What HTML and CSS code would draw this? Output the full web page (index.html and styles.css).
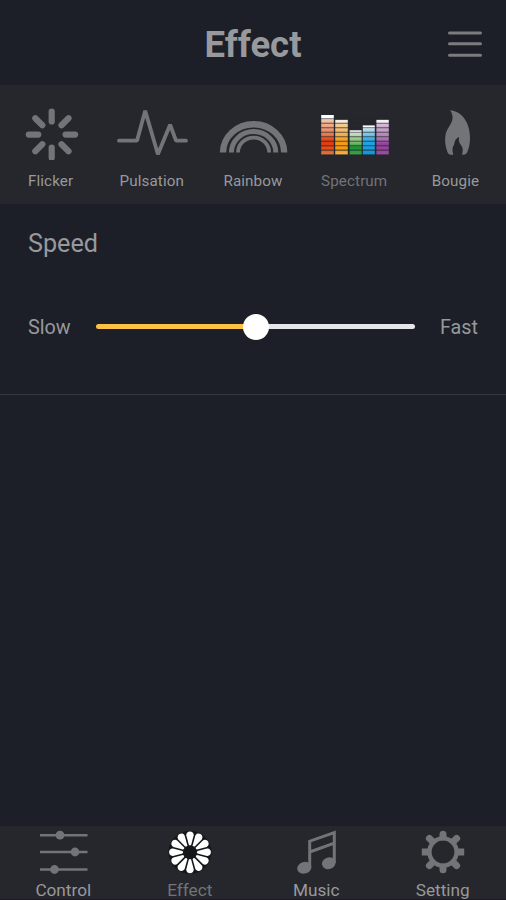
FILE: index.html
```html
<!DOCTYPE html>
<html lang="en">
<head>
<meta charset="utf-8">
<title>Effect</title>
<link rel="stylesheet" href="styles.css">
</head>
<body>
<div class="app">
  <header class="header">
    <h1 class="title">Effect</h1>
    <svg class="menu" viewBox="0 0 36 28" stroke="currentColor" stroke-width="3" stroke-linecap="round"><path d="M2.5 2h31M2.5 12.8h31M2.5 24.2h31"/></svg>
  </header>
  <nav class="effects">
    <div class="effect">
      <svg class="effect-icon" viewBox="11 100 80 60" fill="none" stroke="currentColor" stroke-width="6.2" stroke-linecap="round"><path d="M51.7 111.5v10M51.7 147.7v10M28.8 134.6h9.5M65.6 134.6h9.5M35.3 118.2l7 7M61.5 125.2l7-7M35.3 151.2l7-7M61.5 144.2l7 7"/></svg>
      <span>Flicker</span>
    </div>
    <div class="effect">
      <svg class="effect-icon" viewBox="112 100 80 60" fill="none" stroke="currentColor" stroke-width="3.8" stroke-linecap="round" stroke-linejoin="bevel"><path d="M119 140.7h18l8.2-30 12.7 43.6 12.2-29.6 5.9 16h10"/></svg>
      <span>Pulsation</span>
    </div>
    <div class="effect">
      <svg class="effect-icon" viewBox="213 100 80 60" fill="none" stroke="currentColor" stroke-width="6.4"><path d="M223 152.6a30.6 28.4 0 0 1 61.2 0"/><path stroke-width="5" d="M231.4 152.6a22.2 21 0 0 1 44.4 0"/><path stroke-width="3.8" d="M238 152.6a15.6 15 0 0 1 31.2 0"/></svg>
      <span>Rainbow</span>
    </div>
    <div class="effect active">
      <svg class="effect-icon" viewBox="314.4 100 80 60" fill="none">
        <defs>
          <linearGradient id="red" gradientUnits="userSpaceOnUse" x1="0" y1="115" x2="0" y2="155"><stop offset=".1" stop-color="#fff"/><stop offset=".12" stop-color="#f3c7aa"/><stop offset=".48" stop-color="#e87b50"/><stop offset=".65" stop-color="#df3d12"/><stop offset=".78" stop-color="#df4213"/><stop offset="1" stop-color="#e67a3c"/></linearGradient>
          <linearGradient id="orange" gradientUnits="userSpaceOnUse" x1="0" y1="119" x2="0" y2="155"><stop offset=".1" stop-color="#f8eadb"/><stop offset=".13" stop-color="#f4ce9f"/><stop offset=".65" stop-color="#f29a14"/><stop offset=".87" stop-color="#f29d10"/><stop offset="1" stop-color="#f6bd5c"/></linearGradient>
          <linearGradient id="green" gradientUnits="userSpaceOnUse" x1="0" y1="128" x2="0" y2="155"><stop offset=".17" stop-color="#fff"/><stop offset=".2" stop-color="#c7dfbd"/><stop offset=".55" stop-color="#79b76e"/><stop offset=".72" stop-color="#169632"/><stop offset="1" stop-color="#41a34a"/></linearGradient>
          <linearGradient id="blue" gradientUnits="userSpaceOnUse" x1="0" y1="124" x2="0" y2="155"><stop offset=".13" stop-color="#fff"/><stop offset=".16" stop-color="#b8def1"/><stop offset=".55" stop-color="#28a4df"/><stop offset="1" stop-color="#0998df"/></linearGradient>
          <linearGradient id="purple" gradientUnits="userSpaceOnUse" x1="0" y1="119" x2="0" y2="155"><stop offset=".1" stop-color="#f5eff5"/><stop offset=".13" stop-color="#d8bfda"/><stop offset=".55" stop-color="#a875ae"/><stop offset=".7" stop-color="#8f4198"/><stop offset="1" stop-color="#9e4ba4"/></linearGradient>
        </defs>
        <path fill="url(#red)" d="M321.6 115h12.6v39.4h-12.6z"/><path fill="url(#orange)" d="M335.6 119.8h12.6v34.6h-12.6z"/><path fill="url(#green)" d="M350 130.3h12v24.1h-12z"/><path fill="url(#blue)" d="M363.2 125.4h12v29h-12z"/><path fill="url(#purple)" d="M376.8 119.8h12.4v34.6h-12.4z"/>
        <path class="segments" d="M320 118.8h70M320 123.3h70M320 127.8h70M320 132.2h70M320 136.7h70M320 141.2h70M320 145.7h70M320 150.1h70"/>
      </svg>
      <span>Spectrum</span>
    </div>
    <div class="effect">
      <svg class="effect-icon" viewBox="415.4 100 80 60" fill="currentColor"><path d="M450.6 110.2c8.5.8 14.5 6.5 17.4 14.3 3.2 8.6 3.4 19-.4 27.8-.8 2-2.4 2.7-5.2 2.4 1.3-4.2 1-7.2-1.1-9.8-1.8-2.2-2.5-4.4-1.8-7.8-3.2 1.2-4.5 3.8-4.9 7.2-2 2.7-2.3 6-.8 10.4-3.6.4-5.2-.5-6.1-3-3-9-3.3-18.2 1.7-25 3.7-5.2 5.2-10.3 1.2-16.5z"/></svg>
      <span>Bougie</span>
    </div>
  </nav>
  <main class="panel">
    <h2 class="subtitle">Speed</h2>
    <div class="speed">
      <span>Slow</span>
      <div class="track"><div class="thumb"></div></div>
      <span class="fast">Fast</span>
    </div>
  </main>
  <nav class="tabs">
    <div class="tab">
      <svg class="tab-icon" viewBox="33 828 60 50" fill="currentColor"><path fill="none" stroke="currentColor" stroke-width="2.5" d="M40 835.2h47.5M40 852h47.5M40 869.5h47.5"/><circle cx="60" cy="835.2" r="4.4"/><circle cx="75" cy="852" r="4.4"/><circle cx="54.5" cy="869.5" r="4.4"/></svg>
      <span>Control</span>
    </div>
    <div class="tab active">
      <svg class="tab-icon" viewBox="-30 -24.3 60 50"><circle r="21.5" fill="#15161a"/><defs><path id="petal" fill="#fff" d="M-1.2-7.5L-3.7-17C-4.2-22.2 4.2-22.2 3.7-17L1.2-7.5Q0-6-1.2-7.5z"/></defs><use href="#petal"/><use href="#petal" transform="rotate(30)"/><use href="#petal" transform="rotate(60)"/><use href="#petal" transform="rotate(90)"/><use href="#petal" transform="rotate(120)"/><use href="#petal" transform="rotate(150)"/><use href="#petal" transform="rotate(180)"/><use href="#petal" transform="rotate(210)"/><use href="#petal" transform="rotate(240)"/><use href="#petal" transform="rotate(270)"/><use href="#petal" transform="rotate(300)"/><use href="#petal" transform="rotate(330)"/></svg>
      <span>Effect</span>
    </div>
    <div class="tab">
      <svg class="tab-icon" viewBox="286.5 828 60 50" fill="currentColor"><path fill="none" stroke="currentColor" stroke-width="3" d="M310.2 868v-26.8l24.6-8.7V863M310.2 852l24.6-8.8"/><ellipse cx="304.8" cy="867.8" rx="7.2" ry="5.8" transform="rotate(-18 304.8 867.8)"/><ellipse cx="329.3" cy="863.2" rx="7" ry="5.8" transform="rotate(-18 329.3 863.2)"/></svg>
      <span>Music</span>
    </div>
    <div class="tab">
      <svg class="tab-icon" viewBox="-30 -24 60 50" fill="none" stroke="currentColor"><circle r="13.6" stroke-width="4.4"/><path stroke-width="7" stroke-linecap="round" d="M0-15v-2.8M0 15v2.8M10.6-10.6l3-3M-10.6-10.6l-3-3M10.6 10.6l3 3M-10.6 10.6l-3 3"/><path stroke-width="7" d="M-14 0h-7.2M14 0h7.2"/></svg>
      <span>Setting</span>
    </div>
  </nav>
</div>
</body>
</html>
```
FILE: styles.css
```css
* {
  box-sizing: border-box;
}

body {
  margin: 0;
  background: #1c1f27;
  color: #98999c;
  font-family: Roboto, "Liberation Sans", sans-serif;
}

.app {
  display: flex;
  flex-direction: column;
  height: 900px;
  overflow: hidden;
}

.header {
  display: grid;
  grid-template-columns: 1fr auto 1fr;
  align-items: center;
  height: 85px;
  padding: 4px 23px 0;
}

.title {
  grid-column: 2;
  margin: 0;
  color: #98999c;
  font-size: 36.5px;
  line-height: 42px;
  font-weight: 700;
}

.menu {
  width: 36px;
  height: 28px;
  justify-self: end;
  color: #7b7c80;
}

.effects {
  display: grid;
  grid-template-columns: repeat(5, 1fr);
  height: 119px;
  padding-top: 15px;
  background: #25272c;
}

.effect,
.tab {
  display: flex;
  flex-direction: column;
  align-items: center;
}

.effect {
  gap: 12px;
  font-size: 15.2px;
  line-height: 18px;
  letter-spacing: 0.1px;
}

.effect-icon {
  width: 80px;
  height: 60px;
  color: #737477;
}

.effect.active span,
.tab.active span {
  color: #727377;
}

.segments {
  stroke: #25272c;
  stroke-opacity: 0.7;
  stroke-width: 1.1;
}

.panel {
  height: 191px;
  padding: 24px 28px 0;
  border-bottom: 1px solid #35373d;
}

.subtitle {
  margin: 0;
  font-size: 25.2px;
  line-height: 32px;
  font-weight: 400;
}

.speed {
  display: grid;
  grid-template-columns: 68px 319px auto;
  align-items: center;
  height: 24px;
  margin-top: 56px;
  font-size: 19.8px;
  line-height: 24px;
}

.track {
  display: flex;
  align-items: center;
  justify-content: center;
  height: 5px;
  margin-top: -3px;
  border-radius: 3px;
  background: linear-gradient(90deg, #fbc044 50%, #e5e6eb 50%);
}

.thumb {
  flex: none;
  width: 26px;
  height: 26px;
  border-radius: 50%;
  background: #fff;
}

.fast {
  padding-left: 25px;
}

.tabs {
  display: grid;
  grid-template-columns: repeat(4, 1fr);
  height: 74px;
  margin-top: auto;
  padding-top: 2px;
  background: #25272c;
  border-bottom: 1px solid #211722;
}

.tab {
  font-size: 17.2px;
  line-height: 24px;
}

.tab-icon {
  width: 60px;
  height: 50px;
  color: #737477;
}
```
